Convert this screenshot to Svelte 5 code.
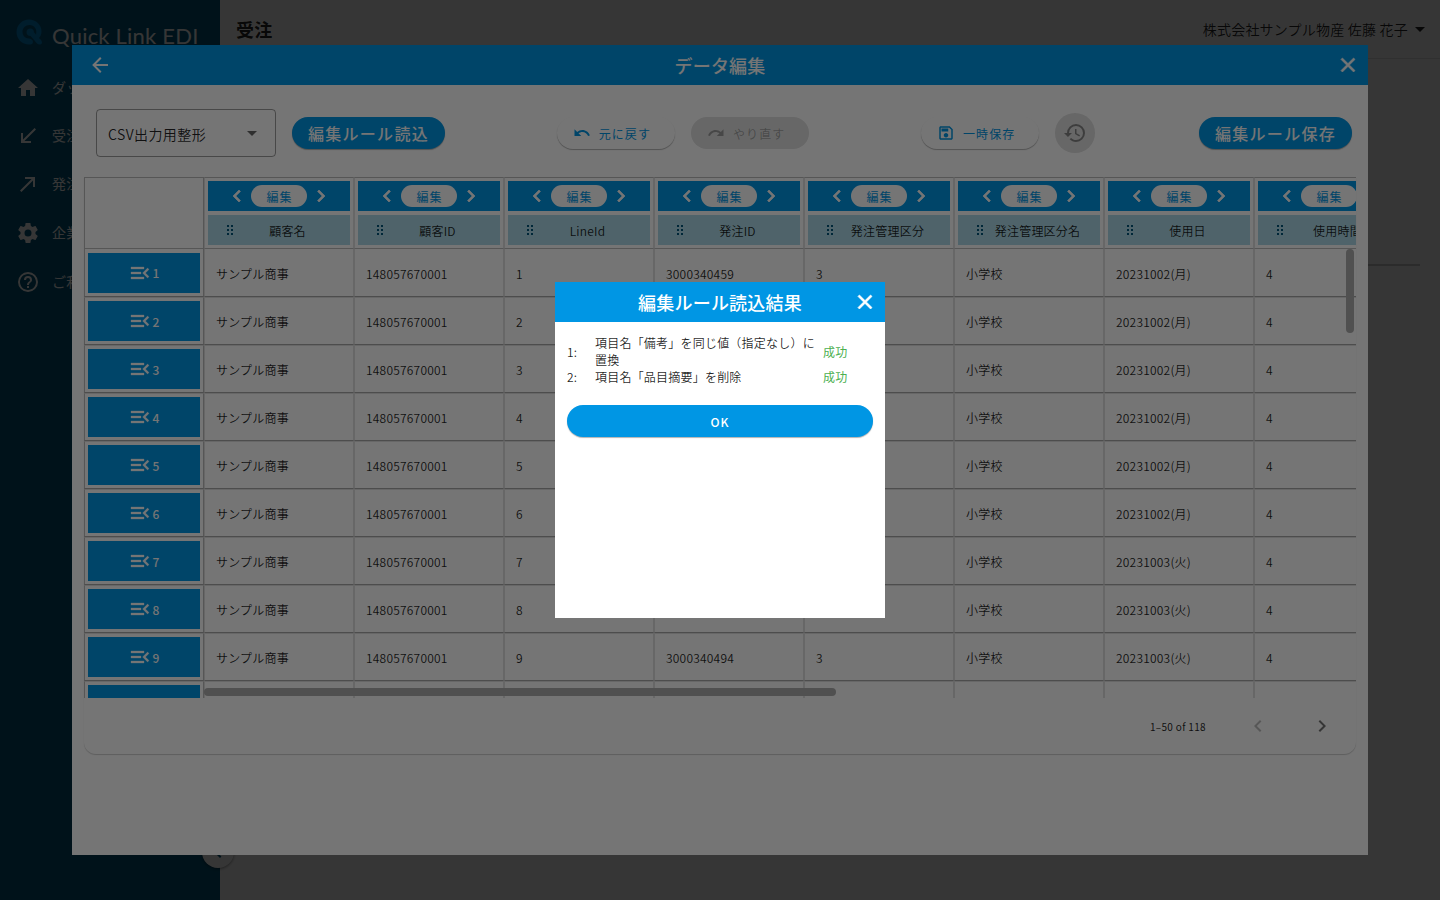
<script lang="ts">
	const icons = {
		home: 'M10,20V14H14V20H19V12H22L12,3L2,12H5V20H10Z',
		received: 'M20,5.41L18.59,4L7,15.59V9H5V19H15V17H8.41',
		made: 'M9,5V7H15.59L4,18.59L5.41,20L17,8.41V15H19V5',
		cog: 'M12,15.5A3.5,3.5 0 0,1 8.5,12A3.5,3.5 0 0,1 12,8.5A3.5,3.5 0 0,1 15.5,12A3.5,3.5 0 0,1 12,15.5M19.43,12.97C19.47,12.65 19.5,12.33 19.5,12C19.5,11.67 19.47,11.34 19.43,11L21.54,9.37C21.73,9.22 21.78,8.95 21.66,8.73L19.66,5.27C19.54,5.05 19.27,4.96 19.05,5.05L16.56,6.05C16.04,5.66 15.5,5.32 14.87,5.07L14.5,2.42C14.46,2.18 14.25,2 14,2H10C9.75,2 9.54,2.18 9.5,2.42L9.13,5.07C8.5,5.32 7.96,5.66 7.44,6.05L4.95,5.05C4.73,4.96 4.46,5.05 4.34,5.27L2.34,8.73C2.21,8.95 2.27,9.22 2.46,9.37L4.57,11C4.53,11.34 4.5,11.67 4.5,12C4.5,12.33 4.53,12.65 4.57,12.97L2.46,14.63C2.27,14.78 2.21,15.05 2.34,15.27L4.34,18.73C4.46,18.95 4.73,19.03 4.95,18.95L7.44,17.94C7.96,18.34 8.5,18.68 9.13,18.93L9.5,21.58C9.54,21.82 9.75,22 10,22H14C14.25,22 14.46,21.82 14.5,21.58L14.87,18.93C15.5,18.67 16.04,18.34 16.56,17.94L19.05,18.95C19.27,19.03 19.54,18.95 19.66,18.73L21.66,15.27C21.78,15.05 21.73,14.78 21.54,14.63L19.43,12.97Z',
		help: 'M11,18H13V16H11V18M12,2A10,10 0 0,0 2,12A10,10 0 0,0 12,22A10,10 0 0,0 22,12A10,10 0 0,0 12,2M12,20C7.59,20 4,16.41 4,12C4,7.59 7.59,4 12,4C16.41,4 20,7.59 20,12C20,16.41 16.41,20 12,20M12,6A4,4 0 0,0 8,10H10A2,2 0 0,1 12,8A2,2 0 0,1 14,10C14,12 11,11.75 11,15H13C13,12.75 16,12.5 16,10A4,4 0 0,0 12,6Z',
		back: 'M20,11V13H8L13.5,18.5L12.08,19.92L4.16,12L12.08,4.08L13.5,5.5L8,11H20Z',
		close: 'M19,6.41L17.59,5L12,10.59L6.41,5L5,6.41L10.59,12L5,17.59L6.41,19L12,13.41L17.59,19L19,17.59L13.41,12L19,6.41Z',
		down: 'M7,10L12,15L17,10H7Z',
		undo: 'M12.5,8C9.85,8 7.45,9 5.6,10.6L2,7V16H11L7.38,12.38C8.77,11.22 10.54,10.5 12.5,10.5C16.04,10.5 19.05,12.81 20.1,16L22.47,15.22C21.08,11.03 17.15,8 12.5,8Z',
		redo: 'M18.4,10.6C16.55,9 14.15,8 11.5,8C6.85,8 2.92,11.03 1.54,15.22L3.9,16C4.95,12.81 7.95,10.5 11.5,10.5C13.45,10.5 15.23,11.22 16.62,12.38L13,16H22V7L18.4,10.6Z',
		save: 'M17 3H5C3.89 3 3 3.9 3 5V19C3 20.1 3.89 21 5 21H19C20.1 21 21 20.1 21 19V7L17 3M19 19H5V5H16.17L19 7.83V19M12 12C10.34 12 9 13.34 9 15S10.34 18 12 18 15 16.66 15 15 13.66 12 12 12M6 6H15V10H6V6Z',
		history: 'M13.5,8H12V13L16.28,15.54L17,14.33L13.5,12.25V8M13,3A9,9 0 0,0 4,12H1L4.96,16.03L9,12H6A7,7 0 0,1 13,5A7,7 0 0,1 20,12A7,7 0 0,1 13,19C11.07,19 9.32,18.21 8.06,16.94L6.64,18.36C8.27,20 10.5,21 13,21A9,9 0 0,0 22,12A9,9 0 0,0 13,3',
		left: 'M15.41,16.58L10.83,12L15.41,7.41L14,6L8,12L14,18L15.41,16.58Z',
		right: 'M8.59,16.58L13.17,12L8.59,7.41L10,6L16,12L10,18L8.59,16.58Z',
		menuOpen: 'M21,15.61L19.59,17L14.58,12L19.59,7L21,8.39L17.44,12L21,15.61M3,6H16V8H3V6M3,13V11H13V13H3M3,18V16H16V18H3Z',
		grip: 'M0,0H2V2H0ZM4,0H6V2H4ZM0,4H2V6H0ZM4,4H6V6H4ZM0,8H2V10H0ZM4,8H6V10H4Z'
	};

	const mainNav = [
		{ icon: icons.home, label: 'ダッシュボード' },
		{ icon: icons.received, label: '受注' },
		{ icon: icons.made, label: '発注' }
	];
	const subNav = [
		{ icon: icons.cog, label: '企業設定' },
		{ icon: icons.help, label: 'ご利用ガイド' }
	];

	const columns = ['顧客名', '顧客ID', 'LineId', '発注ID', '発注管理区分', '発注管理区分名', '使用日', '使用時間'];

	const rows = Array.from({ length: 10 }, (_, i) => [
		'サンプル商事',
		'148057670001',
		String(i + 1),
		i === 8 ? '3000340494' : String(3000340459 + i),
		'3',
		'小学校',
		i < 6 ? '20231002(月)' : '20231003(火)',
		'4'
	]);

	const results = [
		{ text: '項目名「備考」を同じ値（指定なし）に置換', status: '成功' },
		{ text: '項目名「品目摘要」を削除', status: '成功' }
	];

	let rule = $state('csv');
	let resultOpen = $state(true);
</script>

{#snippet icon(path: string, size = 24)}
	<svg width={size} height={size} viewBox="0 0 24 24" fill="currentColor" aria-hidden="true"><path d={path} /></svg>
{/snippet}

{#snippet navList(items: { icon: string; label: string }[])}
	{#each items as item (item.label)}
		<a class="nav-item" href="#top">
			{@render icon(item.icon)}
			<span>{item.label}</span>
		</a>
	{/each}
{/snippet}

<div class="app">
	<aside class="sidebar">
		<div class="brand">
			<svg width="26" height="26" viewBox="0 0 26 26" aria-hidden="true">
				<path
					fill="currentColor"
					fill-rule="evenodd"
					d="M13 0.5C20 0.5 25.5 5.500 25.5 12.500C25.5 15.500 24.5 17.500 23 19C25 20.500 26 22 26 23.500C26 25 25 25.500 23.500 25.500C21.500 25.500 20.500 24 18.500 21.500L14.500 17C12 17 10.500 15.500 10.500 13.200C10.500 11 12 9.500 14.200 9.500C16.500 9.500 18 11 18 13.200L20 15.500C21.500 10 18 6 13.500 6C9.500 6 6.500 9 6.500 12.800C6.500 16.500 9 19.500 13 19.500C15 19.500 17 21 17 23C17 25 15.500 25.500 13 25.500C6 25.500 0.500 20 0.500 13C0.500 6 6 0.500 13 0.500Z"
				/>
			</svg>
			<span>Quick Link EDI</span>
		</div>
		<nav>
			<div class="nav-main">{@render navList(mainNav)}</div>
			<div class="nav-sub">{@render navList(subNav)}</div>
		</nav>
		<button class="collapse" aria-label="メニューを閉じる">{@render icon(icons.left)}</button>
	</aside>
	<div class="page">
		<header class="topbar">
			<h1>受注</h1>
			<button class="account">
				株式会社サンプル物産 佐藤 花子
				{@render icon(icons.down)}
			</button>
		</header>
		<main class="content"><hr /></main>
	</div>
</div>

<div class="overlay">
	<section class="dialog editor" aria-label="データ編集">
		<header class="dialog-bar">
			<button class="bar-btn back" aria-label="戻る">{@render icon(icons.back)}</button>
			<h2>データ編集</h2>
			<button class="bar-btn thick" aria-label="閉じる">{@render icon(icons.close)}</button>
		</header>
		<div class="editor-body">
			<div class="toolbar">
				<div class="group">
					<div class="select">
						<select bind:value={rule} aria-label="編集ルール">
							<option value="csv">CSV出力用整形</option>
						</select>
						<span class="caret">{@render icon(icons.down)}</span>
					</div>
					<button class="btn primary large">編集ルール読込</button>
				</div>
				<div class="group">
					<button class="btn">{@render icon(icons.undo, 18)}元に戻す</button>
					<button class="btn" disabled>{@render icon(icons.redo, 18)}やり直す</button>
				</div>
				<div class="group">
					<button class="btn">{@render icon(icons.save, 18)}一時保存</button>
					<button class="round" disabled aria-label="履歴">{@render icon(icons.history)}</button>
				</div>
				<button class="btn primary large save-rule">編集ルール保存</button>
			</div>

			<div class="card">
				<div class="scroller">
					<table class="grid">
						<thead>
							<tr>
								<th class="index"></th>
								{#each columns as column (column)}
									<th>
										<div class="col-tools">
											<button class="thick" aria-label="左へ移動">{@render icon(icons.left)}</button>
											<button class="edit">編集</button>
											<button class="thick" aria-label="右へ移動">{@render icon(icons.right)}</button>
										</div>
										<div class="col-name">
											<svg width="6" height="10" viewBox="0 0 6 10" fill="currentColor" aria-hidden="true"><path d={icons.grip} /></svg>
											<span>{column}</span>
										</div>
									</th>
								{/each}
							</tr>
						</thead>
						<tbody>
							{#each rows as row, i (i)}
								<tr>
									<td class="index">
										<button class="row-btn">{@render icon(icons.menuOpen)}{i + 1}</button>
									</td>
									{#each row as cell}
										<td>{cell}</td>
									{/each}
								</tr>
							{/each}
						</tbody>
					</table>
					<div class="thumb vertical"></div>
					<div class="thumb horizontal"></div>
				</div>
				<footer class="pager">
					<span>1–50 of 118</span>
					<div class="pager-buttons">
						<button disabled aria-label="前のページ">{@render icon(icons.left)}</button>
						<button aria-label="次のページ">{@render icon(icons.right)}</button>
					</div>
				</footer>
			</div>
		</div>
	</section>
</div>

{#if resultOpen}
	<div class="overlay">
		<section class="dialog result" aria-label="編集ルール読込結果">
			<header class="dialog-bar">
				<h2>編集ルール読込結果</h2>
				<button class="bar-btn thick" aria-label="閉じる" onclick={() => (resultOpen = false)}>{@render icon(icons.close)}</button>
			</header>
			<div class="result-body">
				<table class="result-list">
					<tbody>
						{#each results as result, i (i)}
							<tr>
								<td class="no">{i + 1}:</td>
								<td class="text">{result.text}</td>
								<td class="status">{result.status}</td>
							</tr>
						{/each}
					</tbody>
				</table>
				<button class="btn primary" onclick={() => (resultOpen = false)}>OK</button>
			</div>
		</section>
	</div>
{/if}

<style>
	:global(body) {
		--primary: #0096e4;
		--text: rgba(0, 0, 0, 0.87);
		--line: #e0e0e0;
		font-family: 'Noto Sans CJK JP', 'Noto Sans', sans-serif;
		font-size: 12px;
		font-weight: 350;
		letter-spacing: 0.0178em;
		color: var(--text);
		overflow: hidden;
	}
	* {
		box-sizing: border-box;
	}
	svg {
		display: block;
		flex: none;
	}
	button {
		display: flex;
		align-items: center;
		justify-content: center;
		padding: 0;
		border: 0;
		background: none;
		font: inherit;
		letter-spacing: inherit;
		color: inherit;
	}
	h1,
	h2 {
		margin: 0;
		font-size: 18px;
		line-height: 28px;
		letter-spacing: 0.0125em;
	}
	.thick :global(svg) {
		stroke: currentColor;
		stroke-width: 0.7;
	}

	.app {
		display: flex;
		height: 100vh;
	}
	.sidebar {
		position: relative;
		width: 220px;
		background: #00567a;
		color: #fff;
	}
	.brand {
		display: flex;
		align-items: center;
		gap: 10px;
		height: 64px;
		padding: 0 16px;
		font-family: Lato, sans-serif;
		font-size: 22px;
		font-weight: 400;
		color: #0087cd;
	}
	.brand span {
		padding-top: 6px;
		color: #fff;
		white-space: nowrap;
	}
	.nav-sub {
		display: flex;
		flex-direction: column;
		gap: 1px;
		margin-top: 1px;
	}
	.nav-item {
		display: flex;
		align-items: center;
		gap: 12px;
		height: 48px;
		padding: 0 16px;
		font-size: 14px;
		font-weight: 400;
		color: inherit;
		text-decoration: none;
		white-space: nowrap;
	}
	.nav-item span {
		padding-bottom: 2px;
	}
	.collapse {
		position: absolute;
		right: -14px;
		bottom: 32px;
		width: 32px;
		height: 32px;
		border-radius: 50%;
		background: #fff;
		color: #00567a;
		box-shadow: 0 1px 3px rgba(0, 0, 0, 0.4);
	}
	.page {
		flex: 1;
	}
	.topbar {
		display: flex;
		align-items: center;
		justify-content: space-between;
		height: 59px;
		padding: 0 8px 0 16px;
		border-bottom: 1px solid var(--line);
	}
	.account {
		font-size: 14px;
	}
	.content {
		padding: 205px 20px 0;
	}
	hr {
		margin: 0;
		border: 0;
		border-top: 2px solid #ccc;
	}

	.overlay {
		position: fixed;
		inset: 0;
		display: flex;
		align-items: center;
		justify-content: center;
		background: rgba(0, 0, 0, 0.54);
	}
	.dialog {
		display: flex;
		flex-direction: column;
		background: #fff;
	}
	.dialog-bar {
		display: grid;
		grid-template-columns: 56px 1fr 56px;
		align-items: center;
		height: 40px;
		background: var(--primary);
		color: #fff;
	}
	.dialog-bar h2 {
		grid-column: 2;
		font-weight: 500;
		text-align: center;
	}
	.bar-btn {
		justify-self: end;
		width: 40px;
		height: 40px;
	}
	.bar-btn.back {
		justify-self: center;
	}
	.editor {
		width: 90vw;
		height: 90vh;
	}
	.editor-body {
		padding: 12px;
	}
	.toolbar {
		display: flex;
		align-items: center;
		justify-content: space-between;
		padding: 12px 4px 20px 12px;
	}
	.group {
		display: flex;
		align-items: center;
		gap: 16px;
	}
	.select {
		display: grid;
		align-items: center;
		width: 180px;
	}
	.select > * {
		grid-area: 1 / 1;
	}
	.select select {
		width: 100%;
		height: 48px;
		padding: 2px 32px 0 11px;
		border: 1px solid rgba(0, 0, 0, 0.38);
		border-radius: 4px;
		appearance: none;
		background: none;
		font: inherit;
		font-size: 14px;
		letter-spacing: 0.03em;
		color: inherit;
	}
	.caret {
		justify-self: end;
		margin-right: 12px;
		color: rgba(0, 0, 0, 0.6);
		pointer-events: none;
	}
	.btn {
		height: 32px;
		padding: 0 24px 0 16px;
		gap: 8px;
		border-radius: 16px;
		background: #fff;
		color: var(--primary);
		font-weight: 400;
		letter-spacing: 0.0893em;
		white-space: nowrap;
		box-shadow: 0 1px 1px rgba(0, 0, 0, 0.3);
	}
	.btn.primary {
		padding: 0 16px;
		background: var(--primary);
		color: #fff;
		font-weight: 500;
	}
	.btn.large {
		font-size: 16px;
		letter-spacing: 0.08em;
	}
	.btn:disabled,
	.round:disabled {
		background: #e0e0e0;
		color: rgba(0, 0, 0, 0.3);
		box-shadow: none;
	}
	.round:disabled {
		color: rgba(0, 0, 0, 0.4);
	}
	.round {
		width: 40px;
		height: 40px;
		border-radius: 50%;
	}
	.save-rule {
		margin-left: -8px;
	}

	.card {
		border-radius: 0 0 12px 12px;
		box-shadow: 0 1px 1px rgba(0, 0, 0, 0.2);
	}
	.scroller {
		position: relative;
		height: 521px;
		overflow: hidden;
	}
	.grid {
		width: 1320px;
		table-layout: fixed;
		border-collapse: separate;
		border-spacing: 0;
	}
	.grid th,
	.grid td {
		width: 150px;
		border-right: 1px solid var(--line);
		border-left: 1px solid var(--line);
		font-weight: inherit;
	}
	.grid th {
		height: 72px;
		padding: 3px;
		border-top: 1px solid #bbb;
		border-bottom: 1px solid #bbb;
	}
	.grid td {
		height: 48px;
		padding: 2px 11px 0;
		border-bottom: 1px solid #a8a8a8;
		white-space: nowrap;
	}
	.grid tr + tr td {
		padding-top: 0;
		border-top: 1px solid var(--line);
	}
	.grid .index {
		width: 120px;
		padding: 0 3px;
		border-right-color: #bbb;
		border-left-color: #bbb;
	}
	.col-tools {
		display: flex;
		align-items: center;
		justify-content: center;
		gap: 2px;
		height: 30px;
		background: var(--primary);
		color: #fff;
	}
	.edit {
		width: 56px;
		height: 22px;
		padding: 1px 0 0 1px;
		border-radius: 11px;
		background: #fff;
		color: var(--primary);
		font-weight: 400;
		letter-spacing: 0.0893em;
	}
	.col-name {
		display: flex;
		align-items: center;
		height: 30px;
		margin-top: 4px;
		padding: 0 8px 0 19px;
		background: #add8e6;
		color: #00567a;
	}
	.col-name span {
		flex: 1;
		color: var(--text);
		text-align: center;
		white-space: nowrap;
	}
	.row-btn {
		width: 100%;
		height: 40px;
		background: var(--primary);
		color: #fff;
		font-weight: 500;
	}
	.row-btn :global(svg) {
		stroke: currentColor;
		stroke-width: 0.3;
	}
	.thumb {
		position: absolute;
		border-radius: 4px;
		background: #aeaeae;
	}
	.thumb.vertical {
		top: 72px;
		right: 2px;
		width: 8px;
		height: 84px;
	}
	.thumb.horizontal {
		bottom: 2px;
		left: 120px;
		width: 632px;
		height: 8px;
	}
	.pager {
		display: flex;
		align-items: center;
		justify-content: flex-end;
		gap: 36px;
		height: 56px;
		padding-right: 18px;
		font-size: 10px;
		font-weight: 400;
		letter-spacing: 0.0333em;
	}
	.pager-buttons {
		display: flex;
		gap: 32px;
	}
	.pager button {
		width: 32px;
		height: 32px;
		color: rgba(0, 0, 0, 0.54);
	}
	.pager button:disabled {
		color: rgba(0, 0, 0, 0.26);
	}

	.result {
		width: 330px;
		height: 336px;
	}
	.result-body {
		display: flex;
		flex-direction: column;
		gap: 20px;
		padding: 12px;
	}
	.result-list {
		width: 100%;
		table-layout: fixed;
		border-spacing: 0;
		line-height: 17px;
	}
	.result-list td {
		padding: 0;
	}
	.result-list .no {
		width: 28px;
	}
	.result-list .status {
		width: 50px;
		color: #4caf50;
		font-weight: 400;
	}
</style>
